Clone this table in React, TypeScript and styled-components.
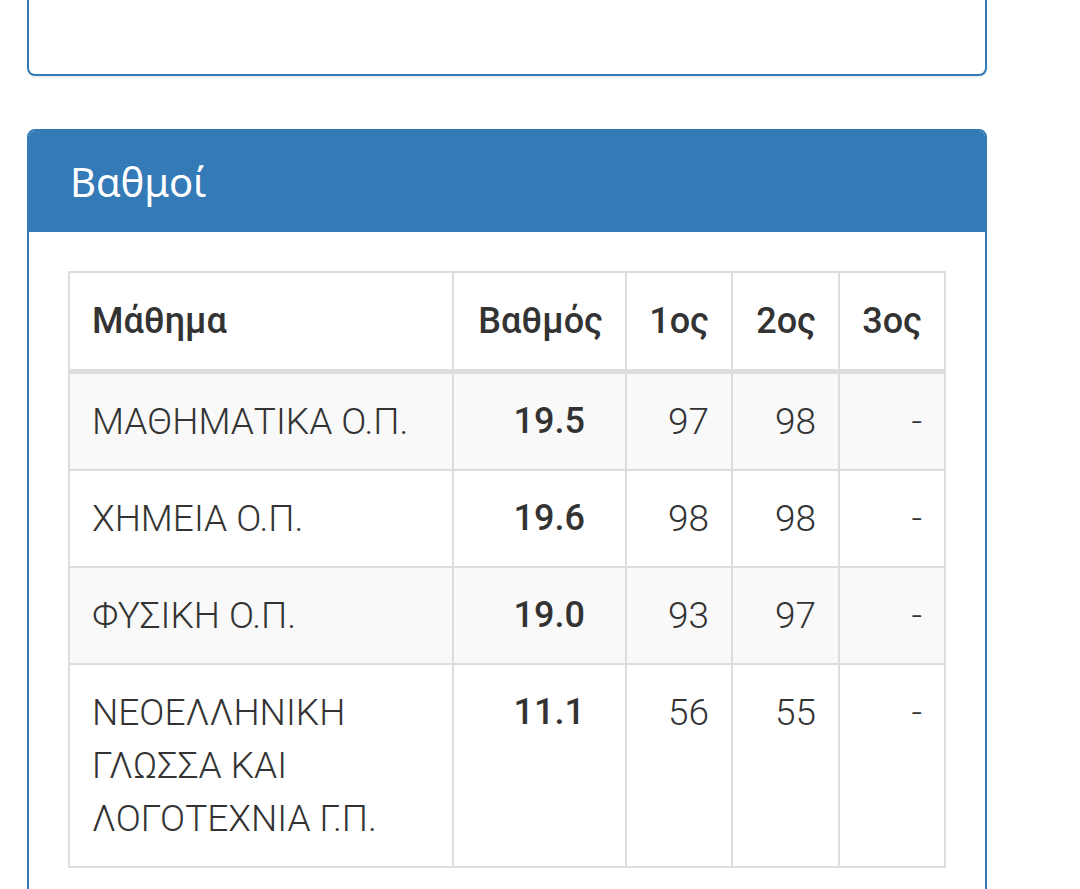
import styled, { createGlobalStyle } from 'styled-components'

const GlobalStyle = createGlobalStyle`
  html, body {
    margin: 0;
    padding: 0;
    background: #ffffff;
    font-family: Roboto, "Noto Sans", "DejaVu Sans", sans-serif;
    color: #333333;
  }
`

type Grade = {
  lesson: string[]
  grade: string
  first: string
  second: string
  third: string
}

const grades: Grade[] = [
  { lesson: ['ΜΑΘΗΜΑΤΙΚΑ Ο.Π.'], grade: '19.5', first: '97', second: '98', third: '-' },
  { lesson: ['ΧΗΜΕΙΑ Ο.Π.'], grade: '19.6', first: '98', second: '98', third: '-' },
  { lesson: ['ΦΥΣΙΚΗ Ο.Π.'], grade: '19.0', first: '93', second: '97', third: '-' },
  {
    lesson: ['ΝΕΟΕΛΛΗΝΙΚΗ', 'ΓΛΩΣΣΑ ΚΑΙ', 'ΛΟΓΟΤΕΧΝΙΑ Γ.Π.'],
    grade: '11.1',
    first: '56',
    second: '55',
    third: '-',
  },
]

export default function App() {
  return (
    <Page>
      <GlobalStyle />
      <PanelTail />
      <Panel>
        <PanelHeading>Βαθμοί</PanelHeading>
        <PanelBody>
          <Table>
            <colgroup>
              <col style={{ width: 384 }} />
              <col style={{ width: 173 }} />
              <col style={{ width: 106 }} />
              <col style={{ width: 107 }} />
              <col style={{ width: 106 }} />
            </colgroup>
            <thead>
              <tr>
                <HeadCell>Μάθημα</HeadCell>
                <HeadCell $right>Βαθμός</HeadCell>
                <HeadCell $right>1ος</HeadCell>
                <HeadCell $right>2ος</HeadCell>
                <HeadCell $right>3ος</HeadCell>
              </tr>
            </thead>
            <tbody>
              {grades.map((g) => (
                <Row key={g.lesson.join(' ')}>
                  <Cell>
                    {g.lesson.map((line, i) => (
                      <span key={i}>
                        {line}
                        {i < g.lesson.length - 1 && <br />}
                      </span>
                    ))}
                  </Cell>
                  <GradeCell>{g.grade}</GradeCell>
                  <Cell $right>{g.first}</Cell>
                  <Cell $right>{g.second}</Cell>
                  <Cell $right>{g.third}</Cell>
                </Row>
              ))}
            </tbody>
          </Table>
        </PanelBody>
      </Panel>
    </Page>
  )
}

const Page = styled.div`
  width: 960px;
  margin-left: 27px;
  display: flex;
  flex-direction: column;
  gap: 53px;
`

const PanelTail = styled.div`
  height: 74px;
  border: 2px solid #337ab7;
  border-top: none;
  border-radius: 0 0 8px 8px;
  background: #ffffff;
  box-shadow: 0 2px 2px rgba(0, 0, 0, 0.06);
`

const Panel = styled.div`
  border: 2px solid #337ab7;
  border-radius: 8px;
  background: #ffffff;
  overflow: hidden;
`

const PanelHeading = styled.div`
  background: #337ab7;
  color: #ffffff;
  font-family: "Noto Sans", "Open Sans", sans-serif;
  font-size: 40px;
  line-height: 51px;
  padding: 25px 41px 25px 41px;
`

const PanelBody = styled.div`
  padding: 39px 39px;
`

const Table = styled.table`
  width: 876px;
  border-collapse: collapse;
  table-layout: fixed;
  font-size: 36px;
  line-height: 53px;
`

const HeadCell = styled.th<{ $right?: boolean }>`
  text-align: ${(p) => (p.$right ? 'right' : 'left')};
  font-weight: 500;
  color: #333333;
  padding: 22px 22px 21px;
  border: 2px solid #dddddd;
  border-bottom: 5px solid #dddddd;
  white-space: nowrap;
  vertical-align: bottom;
`

const Row = styled.tr`
  &:nth-child(odd) {
    background: #f9f9f9;
  }
`

const Cell = styled.td<{ $right?: boolean }>`
  text-align: ${(p) => (p.$right ? 'right' : 'left')};
  font-size: 37px;
  font-weight: 300;
  padding: 21px 22px;
  border: 2px solid #dddddd;
  vertical-align: top;
  white-space: nowrap;
`

const GradeCell = styled(Cell)`
  text-align: right;
  font-size: 36px;
  font-weight: 500;
  padding-right: 40px;
`
